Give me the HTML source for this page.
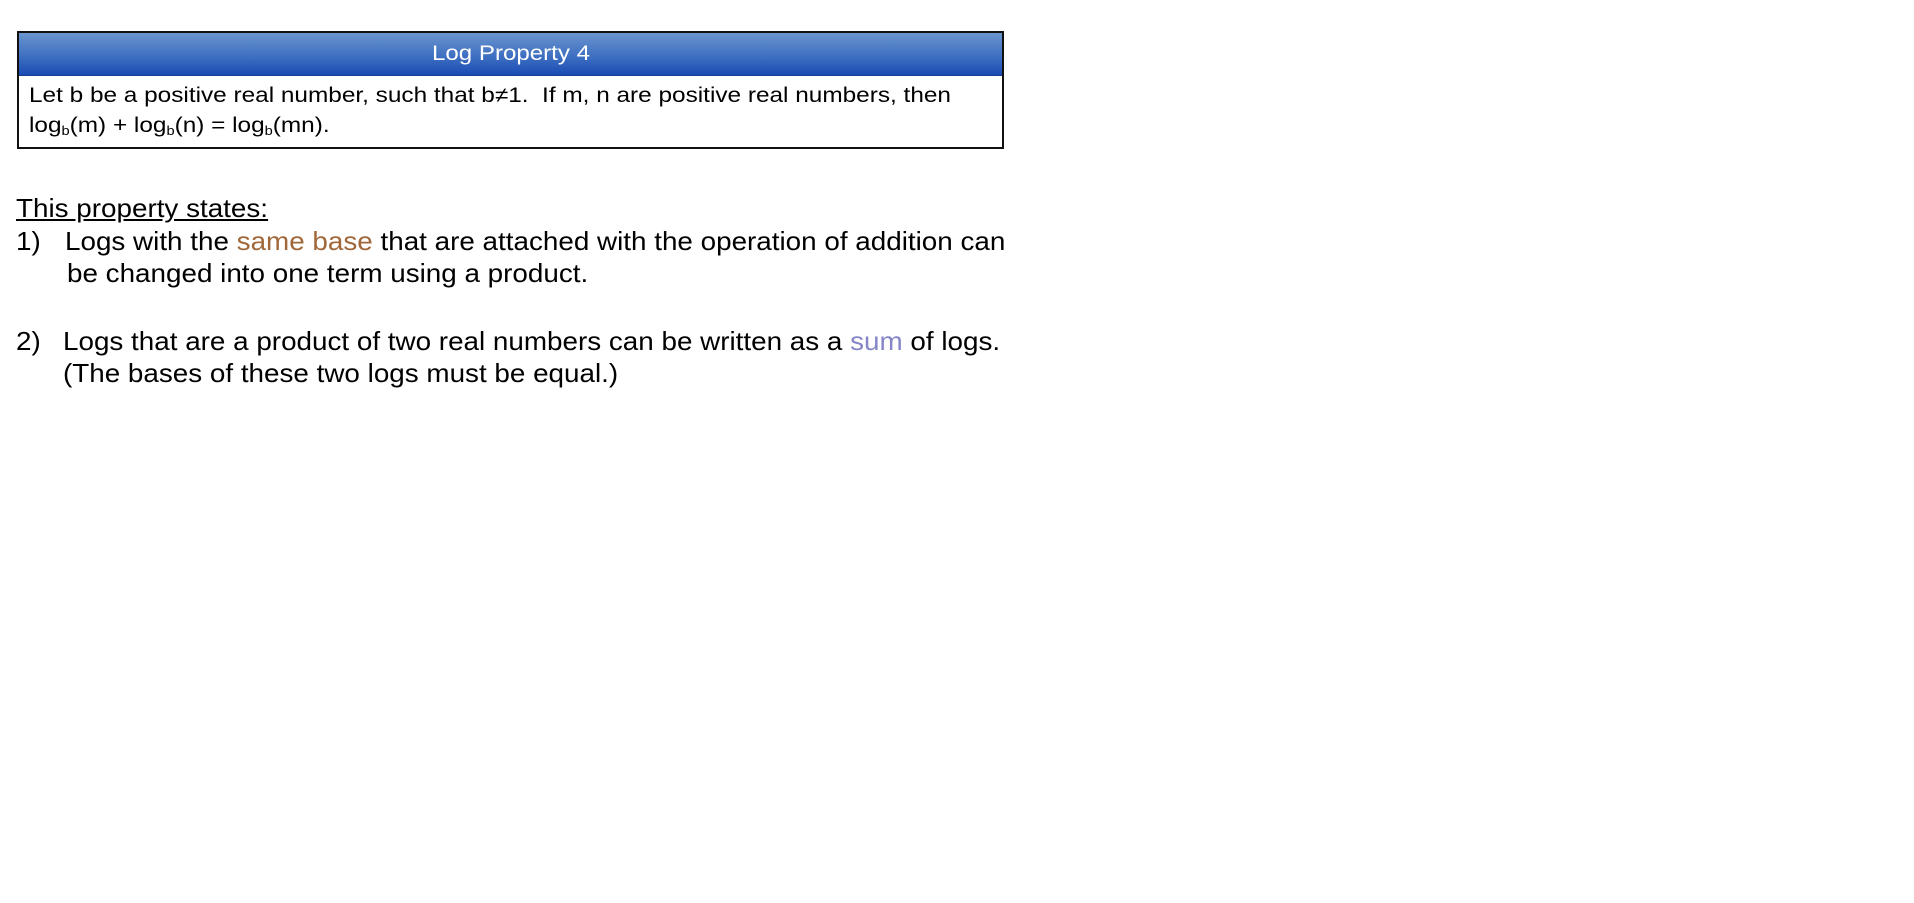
<!DOCTYPE html>
<html><head><meta charset="utf-8"><style>
html,body{margin:0;padding:0;background:#fff;width:1914px;height:903px;overflow:hidden}
body{font-family:"Liberation Sans",Arial,sans-serif;color:#000;position:relative}
.box{position:absolute;left:17px;top:31px;width:983px;height:114px;border:2px solid #111;background:#fff}
.hdr{position:absolute;left:0;top:0;right:0;height:42px;background:linear-gradient(#6a95cf,#3b6cc0 60%,#1a4bb5);border-bottom:1px solid #1a3f90}
.t{position:absolute;white-space:nowrap;line-height:1;transform-origin:0 0}
.s{font-size:21px;transform:scaleX(1.16)}
.l{font-size:26px;transform:scaleX(1.07)}
sub{font-size:0.6em;vertical-align:-0.25em;line-height:0}
</style></head><body>
<div class="box"><div class="hdr"></div></div>
<div class="t" style="font-size:21px;left:432px;top:42.6px;color:#fff;transform:scaleX(1.147)">Log Property 4</div>
<div class="t s" style="left:29px;top:84.6px">Let b be a positive real number, such that b&#8800;1.&nbsp; If m, n are positive real numbers, then</div>
<div class="t s" style="left:29px;top:114.6px">log<sub>b</sub>(m) + log<sub>b</sub>(n) = log<sub>b</sub>(mn).</div>

<div class="t l" style="left:16px;top:195.4px;text-decoration:underline">This property states:</div>
<div class="t l" style="left:16px;top:228.4px">1)</div>
<div class="t l" style="left:65px;top:228.4px">Logs with the <span style="color:#a0683a">same base</span> that are attached with the operation of addition can</div>
<div class="t l" style="left:67px;top:260.4px">be changed into one term using a product.</div>
<div class="t l" style="left:16px;top:328.4px">2)</div>
<div class="t l" style="left:63px;top:328.4px">Logs that are a product of two real numbers can be written as a <span style="color:#8585c8">sum</span> of logs.</div>
<div class="t l" style="left:63px;top:360.4px">(The bases of these two logs must be equal.)</div>
</body></html>
